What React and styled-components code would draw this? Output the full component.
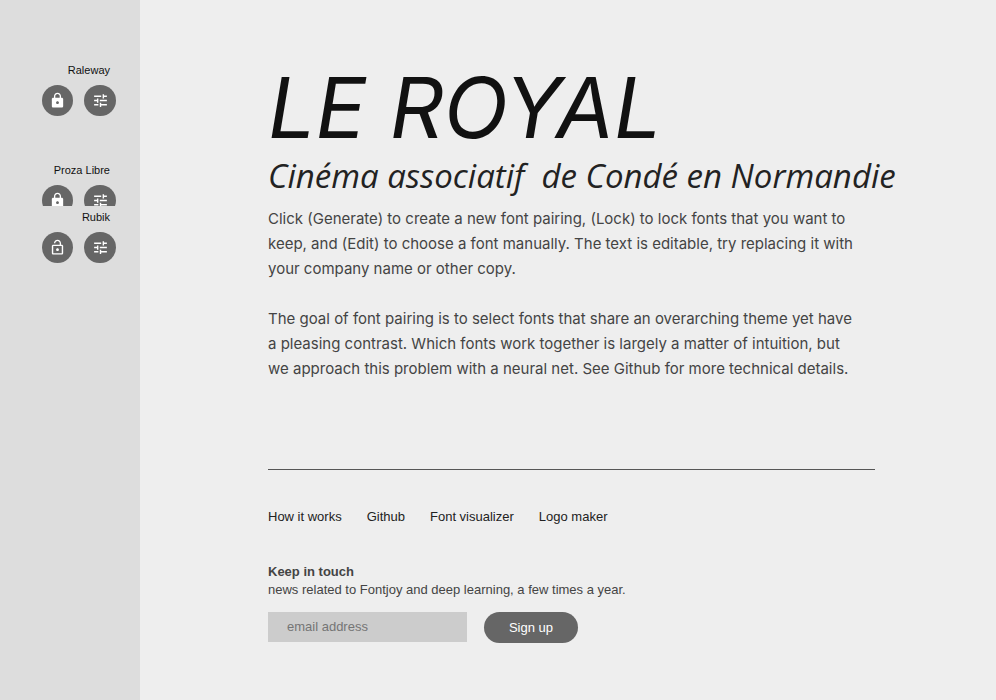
import React from "react";
import styled, { createGlobalStyle } from "styled-components";

const Global = createGlobalStyle`
  * { box-sizing: border-box; }
  body { margin: 0; background: #eee; font-family: "Liberation Sans", Arial, sans-serif; }
`;
const Page = styled.div`display: flex; min-height: 100vh;`;
const Sidebar = styled.aside`
  flex: 0 0 140px; background: #ddd; padding-top: 63px;
`;
const FontPanel = styled.section`
  height: ${(p) => p.$height}px; overflow: hidden; padding: 0 24px 0 42px;
  &:last-child { margin-top: 4px; }
`;
const FontName = styled.div`
  padding-right: 6px; text-align: right; font-size: 11px; line-height: 14px; color: #111;
`;
const Buttons = styled.div`display: flex; justify-content: space-between; margin-top: 8px;`;
const RoundButton = styled.button`
  display: flex; align-items: center; justify-content: center; width: ${(p) => p.$width}px; height: 31px;
  padding: 0; border: 0; border-radius: 16px; background: #666; color: #fff; cursor: pointer;
`;
const Main = styled.main`flex: 1; min-width: 0; padding: 62px 121px 40px 128px;`;
const Title = styled.h1`
  margin: 0; font: italic 400 84px/92px Inter, sans-serif; color: #111; white-space: nowrap;
`;
const Subtitle = styled.h2`
  margin: 0 0 8px; font: italic 400 33px/44px "Open Sans", sans-serif; color: #222; white-space: nowrap;
`;
const Copy = styled.p`
  margin: 0 0 25px; font: 400 15px/25px Inter, sans-serif; color: #444;
`;
const Footer = styled.footer`margin-top: 88px; border-top: 1px solid #555; padding-top: 38px;`;
const Links = styled.nav`display: flex; gap: 25px; font-size: 13px; line-height: 18px;`;
const Link = styled.a`color: #222; text-decoration: none;`;
const Heading = styled.h3`margin: 37px 0 0; font-size: 13px; line-height: 18px; color: #444;`;
const Note = styled.label`display: block; font-size: 13px; line-height: 18px; color: #444;`;
const Form = styled.form`display: flex; gap: 17px; margin-top: 13px;`;
const Email = styled.input`
  width: 199px; height: 30px; border: 0; padding: 0 19px 2px; background: #ccc;
  font: 13px "Liberation Sans", sans-serif; &::placeholder { color: #757575; }
`;
const SignUp = styled.button`
  width: 94px; height: 31px; border: 0; border-radius: 16px; background: #666; color: #fff;
  font: 13px "Liberation Sans", sans-serif;
`;
const Icon = ({ d, size }) => <svg width={size} height={size} viewBox="0 0 24 24" fill="currentColor" aria-hidden="true"><path d={d} /></svg>;
const LOCK = "M18 8h-1V6c0-2.76-2.24-5-5-5S7 3.24 7 6v2H6c-1.1 0-2 .9-2 2v10c0 1.1.9 2 2 2h12c1.1 0 2-.9 2-2V10c0-1.1-.9-2-2-2zm-6 9c-1.1 0-2-.9-2-2s.9-2 2-2 2 .9 2 2-.9 2-2 2zm3.1-9H8.9V6c0-1.71 1.39-3.1 3.1-3.1 1.71 0 3.1 1.39 3.1 3.1v2z";
const OPEN = "M12 17c1.1 0 2-.9 2-2s-.9-2-2-2-2 .9-2 2 .9 2 2 2zm6-9h-1V6c0-2.76-2.24-5-5-5S7 3.24 7 6h1.9c0-1.71 1.39-3.1 3.1-3.1 1.71 0 3.1 1.39 3.1 3.1v2H6c-1.1 0-2 .9-2 2v10c0 1.1.9 2 2 2h12c1.1 0 2-.9 2-2V10c0-1.1-.9-2-2-2zm0 12H6V10h12v10z";
const TUNE = "M3 17v2h6v-2H3zM3 5v2h10V5H3zm10 16v-2h8v-2h-8v-2h-2v6h2zM7 9v2H3v2h4v2h2V9H7zm14 4v-2H11v2h10zm-6-4h2V7h4V5h-4V3h-2v6z";

const FONTS = [
  { name: "Raleway", locked: true, height: 100 },
  { name: "Proza Libre", locked: true, height: 43 },
  { name: "Rubik", locked: false, height: 60 },
];
const LINKS = ["How it works", "Github", "Font visualizer", "Logo maker"];

export default function App() {
  return (
    <Page>
      <Global />
      <Sidebar>
        {FONTS.map((f) => (
          <FontPanel key={f.name} $height={f.height}>
            <FontName>{f.name}</FontName>
            <Buttons>
              <RoundButton $width={31} aria-label={f.locked ? "Unlock" : "Lock"}><Icon size={17} d={f.locked ? LOCK : OPEN} /></RoundButton>
              <RoundButton $width={32} aria-label="Edit"><Icon size={17} d={TUNE} /></RoundButton>
            </Buttons>
          </FontPanel>
        ))}
      </Sidebar>
      <Main>
        <Title>LE ROYAL</Title>
        <Subtitle>Cinéma associatif&nbsp; de Condé en Normandie</Subtitle>
        <Copy>Click (Generate) to create a new font pairing, (Lock) to lock fonts that you want to keep, and (Edit) to choose a font manually. The text is editable, try replacing it with your company name or other copy.</Copy>
        <Copy>The goal of font pairing is to select fonts that share an overarching theme yet have a&nbsp;pleasing contrast. Which fonts work together is largely a matter of intuition, but we&nbsp;approach this problem with a neural net. See Github for more technical details.</Copy>
        <Footer>
          <Links>{LINKS.map((l) => <Link key={l} href="#">{l}</Link>)}</Links>
          <Heading>Keep in touch</Heading>
          <Note htmlFor="email">news related to Fontjoy and deep learning, a few times a year.</Note>
          <Form onSubmit={(e) => e.preventDefault()}>
            <Email id="email" type="email" placeholder="email address" />
            <SignUp type="submit">Sign up</SignUp>
          </Form>
        </Footer>
      </Main>
    </Page>
  );
}
